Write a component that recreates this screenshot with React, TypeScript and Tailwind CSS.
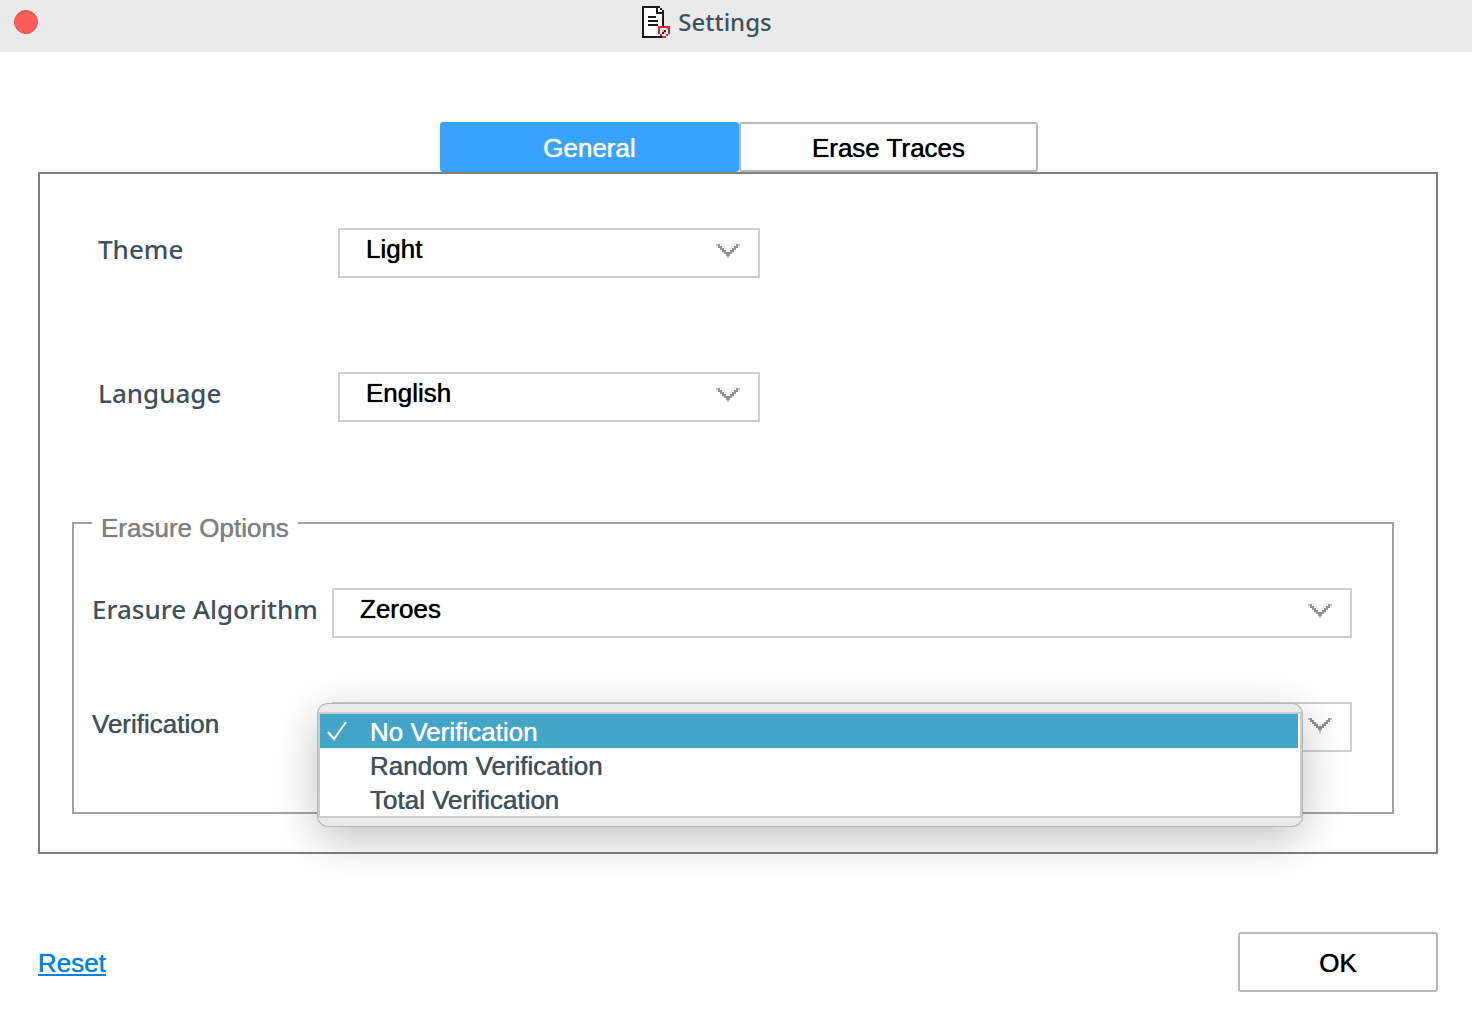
import { useState } from 'react';
import type { ReactNode } from 'react';

const THEMES = ['Light', 'Dark', 'System'];
const LANGUAGES = ['English', 'Deutsch', 'Français', 'Español'];
const ALGORITHMS = ['Zeroes', 'Ones', 'Pseudorandom', 'DoD 5220.22-M'];
const VERIFICATIONS = ['No Verification', 'Random Verification', 'Total Verification'];

// Controls reset text-shadow, so it is set on each one instead of inherited
const heavier = '[text-shadow:0_0_1px_currentColor]';

function DocumentIcon() {
    return (
        <svg width="28" height="32" viewBox="0 0 14 16" shapeRendering="crispEdges" aria-hidden="true">
            <path d="M0 0h9v1h1v1h1v14H0z" fill="#1a1a1a" />
            <path d="M1 1h6v3h3v11H1z" fill="#fff" />
            <path d="M8 1h1v1h1v1H8z" fill="#fff" />
            <path d="M3 5h4v1H3zM3 7h5v1H3zM3 9h5v1H3z" fill="#1a1a1a" />
            <path d="M8 10h6v4h-1v1h-1v1h-2v-1H9v-1H8z" fill="#e3202b" />
            <path d="M9 11h4v3h-1v1h-2v-1H9z" fill="#f4f4f4" />
            <path d="M11 12h1v1h-1zM10 13h1v1h-1z" fill="#222" />
            <path d="M10 12h1v1h-1zM11 13h1v1h-1zM12 11h1v1h-1z" fill="#b5b5b5" />
        </svg>
    );
}

function Chevron() {
    return (
        <svg
            className="pointer-events-none absolute top-[14px] right-5"
            width="24"
            height="16"
            viewBox="0 0 24 16"
            shapeRendering="crispEdges"
            aria-hidden="true"
        >
            <path d="M0 2h2v2H0zM22 2h2v2h-2zM11 14h2v2h-2z" fill="#c0c0c0" />
            <path
                d="M2 2h2v2h2v2h2v2h2v2h4V8h2V6h2V4h2V2h2v4h-2v2h-2v2h-2v2h-2v2h-4v-2H8v-2H6V8H4V6H2z"
                fill="#949494"
            />
        </svg>
    );
}

interface SelectBoxProps {
    id: string;
    options: string[];
    value: string;
    onChange: (value: string) => void;
    children?: ReactNode;
}

function SelectBox({ id, options, value, onChange, children }: SelectBoxProps) {
    return (
        <div className="relative flex-1">
            <select
                id={id}
                value={value}
                onChange={(e) => onChange(e.target.value)}
                className={`block h-[50px] w-full appearance-none rounded-none border-2 border-[#d0d0d0] bg-white pb-2 pl-[26px] text-black outline-none ${heavier}`}
            >
                {options.map((option) => (
                    <option key={option}>{option}</option>
                ))}
            </select>
            <Chevron />
            {children}
        </div>
    );
}

export default function App() {
    const [tab, setTab] = useState('General');
    const [theme, setTheme] = useState('Light');
    const [language, setLanguage] = useState('English');
    const [algorithm, setAlgorithm] = useState('Zeroes');
    const [verification, setVerification] = useState('No Verification');

    const labelClass = "pb-2 font-['Noto_Sans',sans-serif] font-medium text-[#435059]";

    return (
        <div className="min-h-screen bg-white font-['Liberation_Sans',Arial,sans-serif] text-[26px] leading-[30px]">
            <header className="relative flex h-[52px] items-center justify-center bg-[#eaeaea] pr-[58px] pb-2">
                <button
                    aria-label="Close"
                    className="absolute top-[10px] left-[14px] size-6 rounded-full border border-[#e2504c] bg-[#ff5c5a]"
                />
                <DocumentIcon />
                <h1 className="ml-2 font-['Noto_Sans',sans-serif] text-[24px] font-medium text-[#435059]">Settings</h1>
            </header>

            <main className="pt-[70px] pr-[34px] pl-[38px]">
                <div role="tablist" className="flex justify-center pl-0.5">
                    {['General', 'Erase Traces'].map((name) => (
                        <button
                            key={name}
                            role="tab"
                            aria-selected={tab === name}
                            onClick={() => setTab(name)}
                            className={`h-[50px] w-[299px] rounded-[3px] pt-0.5 ${heavier} ${tab === name
                                ? 'bg-[#3aa3ff] text-white'
                                : 'border-2 border-[#b8b8b8] bg-white text-black'
                                }`}
                        >
                            {name}
                        </button>
                    ))}
                </div>

                <section className="border-2 border-[#808080] pt-[54px] pr-[42px] pb-[38px] pl-8">
                    <div className="flex w-[688px] items-center pl-[26px]">
                        <label htmlFor="theme" className={`w-[240px] ${labelClass}`}>Theme</label>
                        <SelectBox id="theme" options={THEMES} value={theme} onChange={setTheme} />
                    </div>
                    <div className="mt-[94px] flex w-[688px] items-center pl-[26px]">
                        <label htmlFor="language" className={`w-[240px] ${labelClass}`}>Language</label>
                        <SelectBox id="language" options={LANGUAGES} value={language} onChange={setLanguage} />
                    </div>

                    <fieldset className="mt-[81px] border-2 border-[#a3a3a3] pr-10 pb-[60px] pl-[18px]">
                        <legend className={`px-[9px] pt-[10px] text-[#808080] ${heavier}`}>Erasure Options</legend>
                        <div className="mt-[45px] flex items-center">
                            <label htmlFor="algorithm" className={`w-[240px] whitespace-nowrap ${labelClass}`}>
                                Erasure Algorithm
                            </label>
                            <SelectBox id="algorithm" options={ALGORITHMS} value={algorithm} onChange={setAlgorithm} />
                        </div>
                        <div className="mt-16 flex items-center">
                            <label htmlFor="verification" className={`w-[240px] pb-1.5 text-[#435059] ${heavier}`}>
                                Verification
                            </label>
                            <SelectBox
                                id="verification"
                                options={VERIFICATIONS}
                                value={verification}
                                onChange={setVerification}
                            >
                                <ul
                                    role="listbox"
                                    aria-label="Verification"
                                    className="absolute top-0.5 right-[50px] -left-[14px] rounded-[10px] bg-[#eaeaea] pt-2 pb-2 text-[#435059] shadow-[0_0_0_1px_#b8b8b8,0_12px_44px_rgba(0,0,0,0.25)]"
                                >
                                    {VERIFICATIONS.map((option) => (
                                        <li
                                            key={option}
                                            role="option"
                                            aria-selected={option === verification}
                                            onClick={() => setVerification(option)}
                                            className="group border-x-2 border-[#cccccc] bg-white pr-0.5 first:border-t-2 last:border-b-2"
                                        >
                                            <div className={`flex h-[34px] items-center pt-0.5 pl-[6px] group-aria-selected:bg-[#43a5c7] group-aria-selected:text-white ${heavier}`}>
                                                <span className="w-11">
                                                    {option === verification && (
                                                        <svg width="22" height="22" viewBox="0 0 22 22" fill="none" aria-hidden="true">
                                                            <path d="M2 11l6 7L20 1" stroke="currentColor" strokeWidth="2" />
                                                        </svg>
                                                    )}
                                                </span>
                                                {option}
                                            </div>
                                        </li>
                                    ))}
                                </ul>
                            </SelectBox>
                        </div>
                    </fieldset>
                </section>

                <footer className="flex items-center justify-between pt-[78px]">
                    <a href="#reset" className={`pt-0.5 text-[#0a7fe0] underline ${heavier}`}>Reset</a>
                    <button className={`h-[60px] w-[200px] rounded-[3px] border-2 border-[#b8b8b8] bg-white pt-0.5 text-black ${heavier}`}>
                        OK
                    </button>
                </footer>
            </main>
        </div>
    );
}
